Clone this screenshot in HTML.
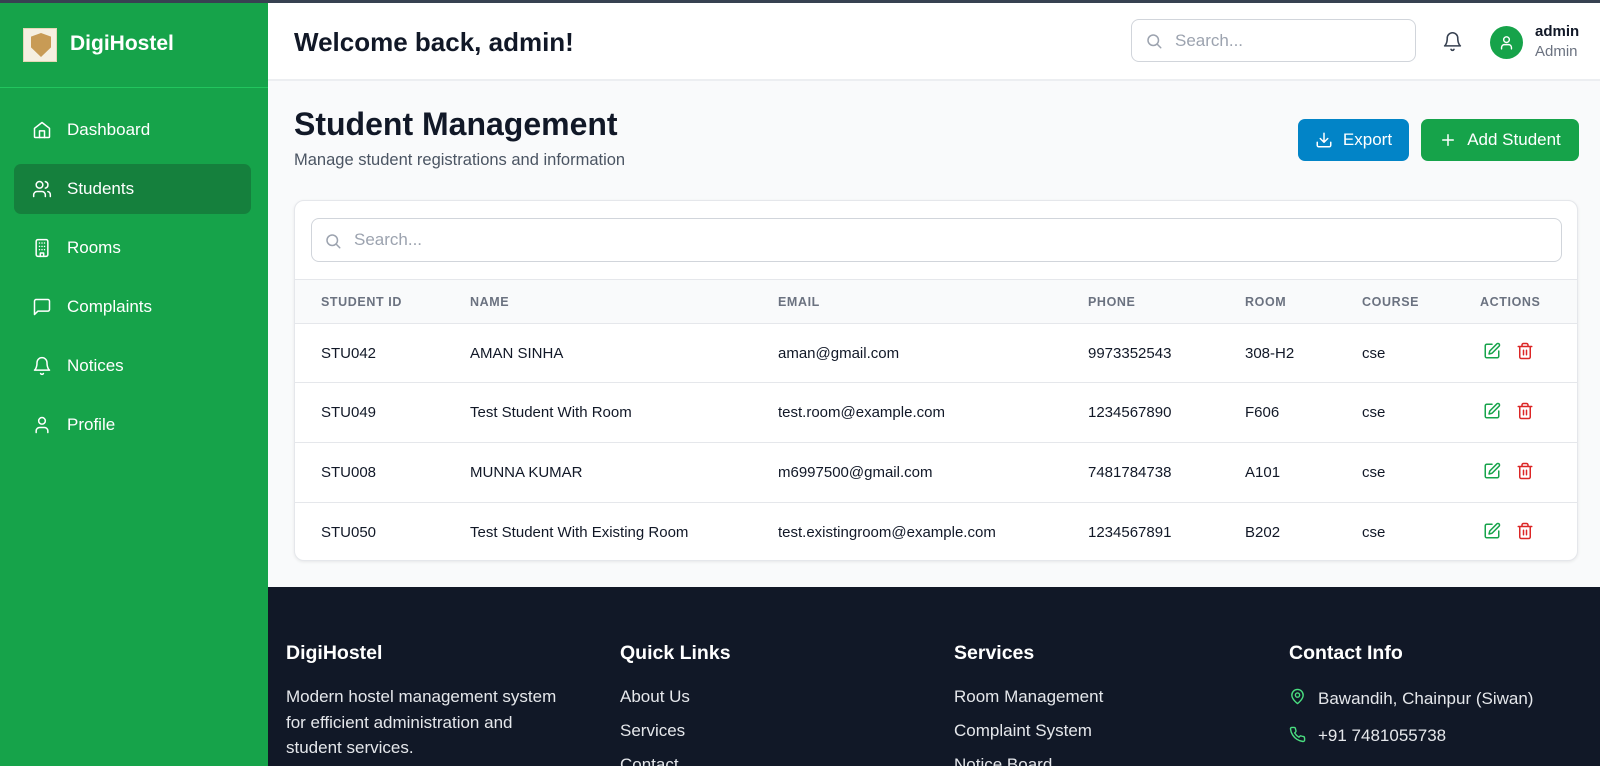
<!DOCTYPE html>
<html><head><meta charset="utf-8"><style>
*{box-sizing:border-box;margin:0;padding:0}
html{background:#111827;width:1600px;height:766px;overflow:hidden}
body{width:1600px;height:766px;overflow:hidden;font-family:"Liberation Sans",sans-serif;background:#f9fafb;position:relative;color:#111827}
.a{position:absolute}
.top{left:0;top:0;width:1600px;height:3px;background:#374151}
.side{left:0;top:3px;width:268px;height:763px;background:#16a34a}
.logo{left:23px;top:28px;width:34px;height:34px;background:#f5efe0;border:1px solid #e5d7b5}
.logo:after{content:"";position:absolute;left:7px;top:4px;width:20px;height:24px;background:#c89b55;clip-path:polygon(50% 0,100% 15%,100% 60%,50% 100%,0 60%,0 15%)}
.brand{left:70px;top:32px;font-size:21px;font-weight:bold;color:#fff}
.div{left:0;top:87px;width:268px;height:1px;background:#22c55e}
.nav{left:14px;width:237px;height:50px;border-radius:7px;color:#fff;font-size:17px;display:flex;align-items:center;padding-left:18px}
.nav svg{width:20px;height:20px;margin-right:15px;fill:none;stroke:#fff;stroke-width:1.8;stroke-linecap:round;stroke-linejoin:round}
.act{background:#15803d}
.hdr{left:268px;top:3px;width:1332px;height:78px;background:#fff;border-bottom:2px solid #eceef1}
.wel{left:294px;top:27px;font-size:26px;font-weight:bold}
.hs{left:1131px;top:19px;width:285px;height:43px;border:1px solid #d1d5db;border-radius:8px;background:#fff;color:#9ca3af;font-size:17px;padding-left:43px;line-height:41px}
.ico{fill:none;stroke-linecap:round;stroke-linejoin:round}
.av{left:1490px;top:26px;width:33px;height:33px;border-radius:50%;background:#16a34a}
.h1{left:294px;top:106px;font-size:32px;font-weight:bold}
.sub{left:294px;top:151px;font-size:16.5px;color:#4b5563}
.btn{top:119px;height:42px;border-radius:7px;color:#fff;font-size:17px;display:flex;align-items:center;justify-content:center;gap:10px}
.card{left:294px;top:200px;width:1284px;height:361px;background:#fff;border:1px solid #e5e7eb;border-radius:10px;box-shadow:0 1px 3px rgba(0,0,0,.08);overflow:hidden}
.cs{left:16px;top:17px;width:1251px;height:44px;border:1px solid #d1d5db;border-radius:8px;color:#9ca3af;font-size:17px;line-height:42px;padding-left:42px}
.th{left:0;top:78px;width:1284px;height:44px;background:#f9fafb;border-top:1px solid #e5e7eb}
.th span{position:absolute;top:15px;font-size:12.5px;font-weight:bold;color:#6b7280;letter-spacing:.6px}
.row{left:0;width:1284px;height:60px;border-top:1px solid #e5e7eb}
.row span{position:absolute;top:21px;font-size:15px;color:#111827}
.foot{left:268px;top:587px;width:1332px;height:179px;background:#111827;color:#e5e7eb}
.fh{top:642px;font-size:19.5px;font-weight:bold;color:#fff}
.fl{font-size:17px;color:#e5e7eb;line-height:34px}
</style></head><body>
<div class="a top"></div>
<div class="a side"></div>
<div class="a logo"></div>
<div class="a brand">DigiHostel</div>
<div class="a div"></div>
<div class="a nav" style="top:105px"><svg viewBox="0 0 24 24"><path d="M3 10l9-7 9 7v10a1 1 0 0 1-1 1H4a1 1 0 0 1-1-1z"/><path d="M9 21v-8h6v8"/></svg>Dashboard</div>
<div class="a nav act" style="top:164px"><svg viewBox="0 0 24 24"><circle cx="9" cy="7" r="4"/><path d="M2 21v-2a4 4 0 0 1 4-4h6a4 4 0 0 1 4 4v2M16 3.1a4 4 0 0 1 0 7.8M22 21v-2a4 4 0 0 0-3-3.9"/></svg>Students</div>
<div class="a nav" style="top:223px"><svg viewBox="0 0 24 24"><rect x="5" y="2" width="14" height="20" rx="2"/><path d="M10 22v-4h4v4M9 6h.01M12 6h.01M15 6h.01M9 10h.01M12 10h.01M15 10h.01M9 14h.01M12 14h.01M15 14h.01"/></svg>Rooms</div>
<div class="a nav" style="top:282px"><svg viewBox="0 0 24 24"><path d="M21 15a2 2 0 0 1-2 2H7l-4 4V5a2 2 0 0 1 2-2h14a2 2 0 0 1 2 2z"/></svg>Complaints</div>
<div class="a nav" style="top:341px"><svg viewBox="0 0 24 24"><path d="M6 8a6 6 0 0 1 12 0c0 7 3 9 3 9H3s3-2 3-9M10.3 21a1.9 1.9 0 0 0 3.4 0"/></svg>Notices</div>
<div class="a nav" style="top:400px"><svg viewBox="0 0 24 24"><circle cx="12" cy="7" r="4"/><path d="M19 21v-2a4 4 0 0 0-4-4H9a4 4 0 0 0-4 4v2"/></svg>Profile</div>

<div class="a hdr"></div>
<div class="a wel">Welcome back, admin!</div>
<div class="a hs">Search...</div>
<svg class="a ico" style="left:1145px;top:32px" width="18" height="18" viewBox="0 0 24 24" stroke="#9ca3af" stroke-width="2"><circle cx="11" cy="11" r="7"/><path d="M21 21l-4.3-4.3"/></svg>
<svg class="a ico" style="left:1442px;top:31px" width="21" height="21" viewBox="0 0 24 24" stroke="#374151" stroke-width="1.8"><path d="M6 8a6 6 0 0 1 12 0c0 7 3 9 3 9H3s3-2 3-9M10.3 21a1.9 1.9 0 0 0 3.4 0"/></svg>
<div class="a av"></div>
<svg class="a ico" style="left:1498px;top:34px" width="17" height="17" viewBox="0 0 24 24" stroke="#fff" stroke-width="2"><circle cx="12" cy="8" r="4"/><path d="M19 21v-2a4 4 0 0 0-4-4H9a4 4 0 0 0-4 4v2"/></svg>
<div class="a" style="left:1535px;top:23px;font-size:15px;font-weight:bold;color:#111827">admin</div>
<div class="a" style="left:1535px;top:43px;font-size:15px;color:#6b7280">Admin</div>

<div class="a h1">Student Management</div>
<div class="a sub">Manage student registrations and information</div>
<div class="a btn" style="left:1298px;width:111px;background:#0284c7"><svg class="ico" width="18" height="18" viewBox="0 0 24 24" stroke="#fff" stroke-width="2"><path d="M21 15v4a2 2 0 0 1-2 2H5a2 2 0 0 1-2-2v-4M7 10l5 5 5-5M12 15V3"/></svg>Export</div>
<div class="a btn" style="left:1421px;width:158px;background:#16a34a"><svg class="ico" width="18" height="18" viewBox="0 0 24 24" stroke="#fff" stroke-width="2"><path d="M12 5v14M5 12h14"/></svg>Add Student</div>

<div class="a card">
<div class="a cs">Search...</div>
<svg class="a ico" style="left:29px;top:31px" width="18" height="18" viewBox="0 0 24 24" stroke="#9ca3af" stroke-width="2"><circle cx="11" cy="11" r="7"/><path d="M21 21l-4.3-4.3"/></svg>
<div class="a th"><span style="left:26px">STUDENT ID</span><span style="left:175px">NAME</span><span style="left:483px">EMAIL</span><span style="left:793px">PHONE</span><span style="left:950px">ROOM</span><span style="left:1067px">COURSE</span><span style="left:1185px">ACTIONS</span></div>
<div class="a row" style="top:122px"><span style="left:26px">STU042</span><span style="left:175px">AMAN SINHA</span><span style="left:483px">aman@gmail.com</span><span style="left:793px">9973352543</span><span style="left:950px">308-H2</span><span style="left:1067px">cse</span></div>
<div class="a row" style="top:181px"><span style="left:26px">STU049</span><span style="left:175px">Test Student With Room</span><span style="left:483px">test.room@example.com</span><span style="left:793px">1234567890</span><span style="left:950px">F606</span><span style="left:1067px">cse</span></div>
<div class="a row" style="top:241px"><span style="left:26px">STU008</span><span style="left:175px">MUNNA KUMAR</span><span style="left:483px">m6997500@gmail.com</span><span style="left:793px">7481784738</span><span style="left:950px">A101</span><span style="left:1067px">cse</span></div>
<div class="a row" style="top:301px"><span style="left:26px">STU050</span><span style="left:175px">Test Student With Existing Room</span><span style="left:483px">test.existingroom@example.com</span><span style="left:793px">1234567891</span><span style="left:950px">B202</span><span style="left:1067px">cse</span></div>
</div>
<svg width="0" height="0" style="position:absolute"><defs>
<symbol id="ed" viewBox="0 0 24 24"><path d="M12 3H5a2 2 0 0 0-2 2v14a2 2 0 0 0 2 2h14a2 2 0 0 0 2-2v-7" /><path d="M18.4 2.6a2.1 2.1 0 0 1 3 3L12 15l-4 1 1-4z"/></symbol>
<symbol id="tr" viewBox="0 0 24 24"><path d="M3 6h18M19 6v14a2 2 0 0 1-2 2H7a2 2 0 0 1-2-2V6M8 6V4a2 2 0 0 1 2-2h4a2 2 0 0 1 2 2v2M10 11v6M14 11v6"/></symbol>
</defs></svg>
<svg class="a ico" style="left:1483px;top:342px" width="18" height="18" stroke="#16a34a" stroke-width="2"><use href="#ed"/></svg>
<svg class="a ico" style="left:1516px;top:342px" width="18" height="18" stroke="#dc2626" stroke-width="2"><use href="#tr"/></svg>
<svg class="a ico" style="left:1483px;top:402px" width="18" height="18" stroke="#16a34a" stroke-width="2"><use href="#ed"/></svg>
<svg class="a ico" style="left:1516px;top:402px" width="18" height="18" stroke="#dc2626" stroke-width="2"><use href="#tr"/></svg>
<svg class="a ico" style="left:1483px;top:462px" width="18" height="18" stroke="#16a34a" stroke-width="2"><use href="#ed"/></svg>
<svg class="a ico" style="left:1516px;top:462px" width="18" height="18" stroke="#dc2626" stroke-width="2"><use href="#tr"/></svg>
<svg class="a ico" style="left:1483px;top:522px" width="18" height="18" stroke="#16a34a" stroke-width="2"><use href="#ed"/></svg>
<svg class="a ico" style="left:1516px;top:522px" width="18" height="18" stroke="#dc2626" stroke-width="2"><use href="#tr"/></svg>

<div class="a foot"></div>
<div class="a fh" style="left:286px">DigiHostel</div>
<div class="a fl" style="left:286px;width:275px;line-height:25.5px;top:684px">Modern hostel management system for efficient administration and student services.</div>
<div class="a fh" style="left:620px">Quick Links</div>
<div class="a fl" style="left:620px;top:680px">About Us<br>Services<br>Contact</div>
<div class="a fh" style="left:954px">Services</div>
<div class="a fl" style="left:954px;top:680px">Room Management<br>Complaint System<br>Notice Board</div>
<div class="a fh" style="left:1289px">Contact Info</div>
<svg class="a ico" style="left:1289px;top:688px" width="17" height="17" viewBox="0 0 24 24" stroke="#4ade80" stroke-width="2"><path d="M20 10c0 6-8 12-8 12s-8-6-8-12a8 8 0 0 1 16 0z"/><circle cx="12" cy="10" r="3"/></svg>
<svg class="a ico" style="left:1289px;top:726px" width="17" height="17" viewBox="0 0 24 24" stroke="#4ade80" stroke-width="2"><path d="M22 16.9v3a2 2 0 0 1-2.2 2 19.8 19.8 0 0 1-8.6-3.1 19.5 19.5 0 0 1-6-6A19.8 19.8 0 0 1 2.1 4.2 2 2 0 0 1 4.1 2h3a2 2 0 0 1 2 1.7c.1.9.4 1.8.7 2.7a2 2 0 0 1-.5 2.1L8 9.8a16 16 0 0 0 6 6l1.3-1.3a2 2 0 0 1 2.1-.4c.9.3 1.8.6 2.7.7a2 2 0 0 1 1.7 2z"/></svg>
<div class="a fl" style="left:1318px;top:680px;line-height:37px">Bawandih, Chainpur (Siwan)<br>+91 7481055738</div>
</body></html>
